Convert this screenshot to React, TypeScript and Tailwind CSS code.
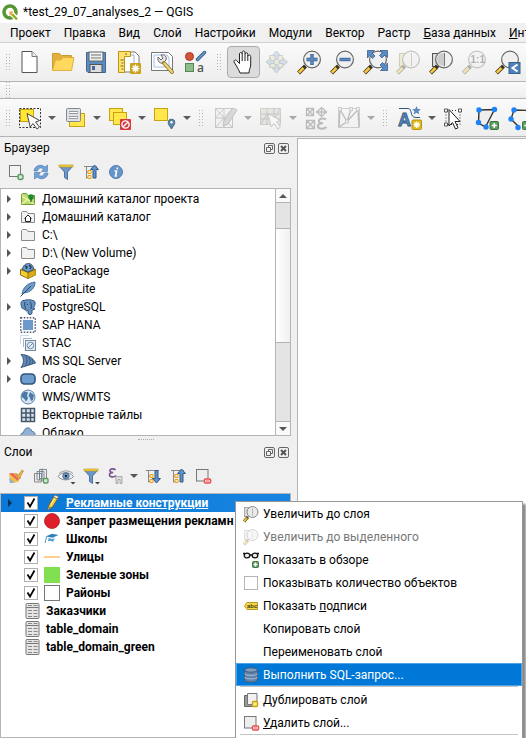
import type { ReactNode } from "react";

type IconProps = { children: ReactNode; size?: number; dim?: boolean };

function Icon({ children, size = 24, dim = false }: IconProps) {
  return (
    <svg
      width={size}
      height={size}
      viewBox={`0 0 ${size} ${size}`}
      fill="none"
      aria-hidden="true"
      className={dim ? "shrink-0 overflow-visible opacity-35" : "shrink-0 overflow-visible"}
    >
      {children}
    </svg>
  );
}

/* ---------- toolbar drawings ---------- */

const NewFile = () => (
  <Icon>
    <path d="M4 1.500h10l5 5v16h-15z" fill="#fff" stroke="#555" />
    <path d="M14 1.500v5h5" fill="#eee" stroke="#777" />
  </Icon>
);

const OpenFolder = () => (
  <Icon>
    <path d="M1.500 20V3.500h7l2 2h10V9" fill="#e3b040" stroke="#c9a030" />
    <path d="M1.500 20.500L4.500 10l5 0 3-2.500h10.500L20.500 20.500z" fill="#ffd95e" stroke="#e0b23c" />
  </Icon>
);

const SaveDisk = () => (
  <Icon>
    <path d="M2.500 2.500h19v20H4l-1.500-1.500z" fill="#5b8bc0" stroke="#3f6797" />
    <rect x="5" y="2" width="14" height="9" fill="#eee" stroke="#666" />
    <path d="M7 5h10M7 8h10" stroke="#777" />
    <rect x="6" y="14.500" width="12" height="8" fill="#ddd" stroke="#555" />
    <rect x="8" y="16" width="3" height="4" fill="#3f6797" />
  </Icon>
);

const NewLayout = () => (
  <Icon>
    <path d="M4 2h14l4 4v16H4z" fill="#fff" stroke="#777" />
    <path d="M7 5h10v10" stroke="#8fb0dd" />
    <path d="M1.500 1.500h12v5h-6v16h-6z" fill="#ffe372" stroke="#b99516" />
    <path d="M3.500 10h3M4.500 13h2M3.500 16h3M4.500 19h2M9 3v2" stroke="#7d6610" />
    <rect x="13" y="13" width="11" height="11" rx="1" fill="#caa21b" />
    <path d="M18.500 14.500v8M14.500 18.500h8M15.800 15.800l5.400 5.400M21.200 15.800l-5.400 5.400" stroke="#fff" strokeWidth="1.400" />
    <circle cx="18.500" cy="18.500" r="2" fill="#fff" />
  </Icon>
);

const LayoutManager = () => (
  <Icon>
    <path d="M1.500 2.500h17l4 4v14h-21z" fill="#fff" stroke="#777" />
    <path d="M4 5h13l2 3v9H4z" stroke="#a8c1e6" />
    <path d="M8 7l3 3 2-2-2-3c4-1 6 2 5 5l-3 3c-3 1-6-2-5-6z" fill="#e6e6e6" stroke="#666" />
    <path d="M14 13l8 9" stroke="#8a7327" strokeWidth="4" strokeLinecap="round" />
    <path d="M14.500 13.500l7.500 8.500" stroke="#eed277" strokeWidth="2.400" strokeLinecap="round" />
  </Icon>
);

const StyleManager = () => (
  <Icon>
    <circle cx="6.500" cy="6.500" r="4" fill="#d4553a" stroke="#a43a24" />
    <path d="M14.500 9.500l7-7" stroke="#3c6191" strokeWidth="3.500" strokeLinecap="round" />
    <path d="M14.500 9.500l7-7" stroke="#6f9bcd" strokeWidth="1.500" strokeLinecap="round" />
    <rect x="2.500" y="13.500" width="8" height="8" fill="#8ebd8b" stroke="#568556" />
    <text x="14" y="22" fontSize="12" fill="#555" className="font-['Open_Sans',sans-serif] font-semibold">a</text>
  </Icon>
);

const PanHand = () => (
  <Icon>
    <path
      d="M8 23c-1-3-2-4-3.500-7L2 12c-.5-2 1.500-2.500 2.500-1.500l3 3V4c0-2 2.500-2 2.700 0V2.500c0-2 2.800-2 2.800 0V4c.3-1.800 2.800-1.600 2.800.3V6c.4-1.600 2.900-1.400 2.900.5V15c0 3-1.700 4-1.700 8z"
      fill="#fff"
      stroke="#222"
    />
    <path d="M10.200 4v7M13 4v7M15.800 6v5" stroke="#222" />
  </Icon>
);

const PanSelection = () => (
  <Icon dim>
    <rect x="4.500" y="5.500" width="13" height="12" fill="#e3dcae" stroke="#a49a5c" />
    <path
      d="M11.500 1l4 4.500h-2.500v4h-3v-4H7.500zM11.500 23l4-4.500h-2.500v-4h-3v4H7.500zM1 12l4.500-4v2.500h4v3h-4V16zM22.500 12L18 8v2.500h-4v3h4V16z"
      fill="#a3b6cb"
      stroke="#6f8296"
    />
  </Icon>
);

const Lens = ({ children, dim = false, behind }: { children?: ReactNode; dim?: boolean; behind?: ReactNode }) => (
  <Icon dim={dim}>
    {behind}
    <path d="M7.500 16L.5 23" stroke="#3b3420" strokeWidth="4" />
    <path d="M5.500 18L.8 22.700" stroke="#fbc93d" strokeWidth="2.600" />
    <circle cx="14" cy="9.500" r="8.400" fill="#efefef" fillOpacity=".9" stroke="#666" strokeWidth="1.200" />
    {children}
  </Icon>
);

const ZoomIn = () => (
  <Lens>
    <path d="M14 4v11M8.500 9.500h11" stroke="#39608d" strokeWidth="3.400" />
    <path d="M14 4.600v9.800M9 9.500h10" stroke="#5b8cc4" strokeWidth="1.800" />
  </Lens>
);
const ZoomOut = () => (
  <Lens>
    <path d="M8.500 9.500h11" stroke="#39608d" strokeWidth="3.400" />
    <path d="M9 9.500h10" stroke="#5b8cc4" strokeWidth="1.800" />
  </Lens>
);
const ZoomFull = () => (
  <Lens>
    <path
      d="M3.500.5h7L8 3l3 3-2.500 2.500-3-3L3.500 8zM23.500.5v7L21 5l-3 3-2.500-2.500 3-3L16 .5zM23.500 20.500h-7L19 18l-3-3 2.500-2.500 3 3 2-2.500z"
      fill="#5b8cc4"
      stroke="#39608d"
      strokeWidth=".8"
    />
  </Lens>
);
const ZoomSelection = () => (
  <Lens dim behind={<rect x="2.500" y="3.500" width="12" height="13" fill="#e0d894" stroke="#8a8350" />}>
    <path d="M14.500 3v13" stroke="#8a8350" />
  </Lens>
);
const ZoomLayer = () => (
  <Lens behind={<rect x="2.500" y="3.500" width="12" height="13" fill="#ddd" stroke="#555" />}>
    <path d="M14 3.500a6 6 0 0 0-7 6 6 6 0 0 0 7 6z" fill="#ccc" />
    <path d="M14.500 3v13" stroke="#777" />
  </Lens>
);
const ZoomNative = () => (
  <Lens dim>
    <text x="7.500" y="13" fontSize="10" fontWeight="700" fill="#333" className="font-['Liberation_Sans',sans-serif]">1:1</text>
  </Lens>
);
const ZoomLast = () => (
  <Lens>
    <rect x="13" y="12.500" width="11" height="11" fill="#4f81bb" stroke="#39608d" />
    <path d="M21.500 14.500l-5 3.500 5 3.500" stroke="#fff" strokeWidth="2" />
  </Lens>
);

const arrowPath = "M9 7.500l3.200 13.500 2.800-3.500 4 5.500 2.500-2-4-5 4-1.500z";

const SelectFeatures = () => (
  <Icon>
    <rect x="1.500" y="2.500" width="21" height="19" stroke="#333" strokeDasharray="2 1.500" />
    <rect x="2.500" y="3.500" width="13" height="12" fill="#ffe733" stroke="#c8a210" />
    <path d={arrowPath} fill="#fff" stroke="#444" />
  </Icon>
);
const SelectByValue = () => (
  <Icon>
    <rect x="6.500" y="7.500" width="15" height="13" fill="#ffe74c" stroke="#c8a210" />
    <rect x="3.500" y="2.500" width="14" height="13" rx="1" fill="#dce3ea" stroke="#888" />
    <path d="M6 6.500h9M6 11.500h9" stroke="#999" strokeWidth="3" />
    <path d="M6.500 6.500h8M6.500 11.500h8" stroke="#fff" />
  </Icon>
);
const Deselect = () => (
  <Icon>
    <rect x="1.500" y="2.500" width="13" height="12" fill="#ffe74c" stroke="#c8a210" />
    <rect x="5.500" y="6.500" width="13" height="12" fill="#ffe74c" stroke="#c8a210" />
    <rect x="12" y="13" width="11" height="11" rx="1" fill="#d8393c" />
    <circle cx="17.500" cy="18.500" r="3.600" stroke="#fff" strokeWidth="1.400" />
    <path d="M15.200 20.800l4.600-4.600" stroke="#fff" strokeWidth="1.400" />
  </Icon>
);
const SelectLocation = () => (
  <Icon>
    <rect x="1.500" y="2.500" width="13" height="12" fill="#ffe74c" stroke="#c8a210" />
    <path d="M18.500 23c-1.500-3-3.300-4-3.300-6.500a3.300 3.300 0 0 1 6.600 0c0 2.500-1.800 3.500-3.300 6.500z" fill="#5c87a8" stroke="#446b8a" />
    <circle cx="18.500" cy="16.300" r="1.200" fill="#fff" />
  </Icon>
);
const CurrentEdits = () => (
  <Icon dim>
    <path d="M1.500 2.500h17v19h-17zM1.500 12h17M10 2.500v19M1.500 2.500l8.500 9.500-8.500 9.500M18.500 2.500L10 12l8.500 9.500M1.500 12L10 2.500" fill="#eee" stroke="#777" />
    <path d="M9 20l1-5L19 2l4 2-9 14z" fill="#b0a5a5" stroke="#666" />
  </Icon>
);
const EditGrid = () => (
  <Icon dim>
    <path d="M1.500 2.500h20v16h-20z" fill="#c7cbb8" stroke="#888" />
    <path d="M1.500 8h20M1.500 13h20M8 2.500v16M15 2.500v16M2 18l6-10 7 5 6-10" stroke="#777" />
    <path d={arrowPath} fill="#fff" stroke="#777" />
  </Icon>
);
const EditEpsilon = () => (
  <Icon dim>
    <path d="M2.500 2.500h7v7h-7zM2.500 2.500l7 7M9.500 2.500l-7 7M2.500 14.500h8v8h-8zM2.500 14.500l8 8M10.500 14.500l-8 8M17.500 1.500l5 4.500-5 4.500-5-4.500zM12.500 6h10M17.500 1.500v9" stroke="#555" strokeWidth="1.300" />
    <path d="M22 13.500c-3-2-8-.5-7 2 .4 1.300 2 1.700 4 1.700-3 0-5 1-5 3 0 3 6 3.300 8.500.8" stroke="#555" strokeWidth="2" />
  </Icon>
);
const EditMesh = () => (
  <Icon dim>
    <path d="M1.500 2.500h21v19h-21z" stroke="#888" />
    <path d="M3 3.500L2 21M3 3.500l7 12L14 3.500M10 15.500l11-12L22 21M10 15.500l-7 5" stroke="#555" strokeWidth="1.300" />
    <path d="M1.500 1.500h3v3h-3zM12.500 1.500h3v3h-3zM19.500 1.500h3v3h-3zM8.500 14h3v3h-3z" fill="#eee" stroke="#777" />
  </Icon>
);
const LabelTool = () => (
  <Icon>
    <text x="0" y="20" fontSize="18" fontWeight="700" fill="#5a89c0" stroke="#325680" strokeWidth=".8" className="font-['Liberation_Sans',sans-serif]">A</text>
    <path d="M1 2.500h9c5 0 1 9 8 9h4" stroke="#325680" />
    <path d="M18.500 0l1.300 3 3.200.2-2.500 2 .8 3.300-2.800-1.800-2.800 1.800.8-3.300-2.500-2 3.200-.2z" fill="#5a89c0" />
    <rect x="14" y="14" width="9.500" height="9.500" rx="1" fill="#e3b91f" stroke="#b8940f" />
    <path d="M18.700 15.500v6.500M15.500 18.700H22M16.500 16.500l4.500 4.500M21 16.500L16.500 21" stroke="#fff" strokeWidth="1.200" />
  </Icon>
);
const MoveVertex = () => (
  <Icon>
    <path d="M3 4.500h14v14H3z" stroke="#333" strokeDasharray="1 2" />
    <path d="M1.500 3h3v3h-3zM15.500 3h3v3h-3zM1.500 17h3v3h-3z" fill="#fff" stroke="#555" />
    <path d="M6 3.500v16.500l3.500-3.500 3 6.500 2.500-1.200-3-6.300h5z" fill="#fff" stroke="#222" />
  </Icon>
);
const AddPolygon = () => (
  <Icon>
    <path d="M3 4L18.500 3.500 9.500 21l-7-4z" fill="#eee" stroke="#333" strokeWidth="1.400" />
    <circle cx="3" cy="4" r="2.700" fill="#1d82f5" />
    <circle cx="18.500" cy="3.500" r="2.700" fill="#1d82f5" />
    <circle cx="2.500" cy="16.500" r="2.700" fill="#1d82f5" />
    <circle cx="10" cy="21" r="2.700" fill="#1d82f5" />
    <rect x="14" y="15.500" width="8.500" height="8" rx="1" fill="#5c9a60" stroke="#3f7545" />
    <path d="M18.300 17v5M15.800 19.500h5" stroke="#fff" strokeWidth="1.600" />
  </Icon>
);
const AddLine = () => (
  <Icon>
    <path d="M22 4.500L5 4 2 13l8 8" stroke="#333" strokeWidth="1.400" />
    <circle cx="5" cy="4" r="2.700" fill="#1d82f5" />
    <circle cx="2" cy="13" r="2.700" fill="#1d82f5" />
    <circle cx="9" cy="21.500" r="2.700" fill="#1d82f5" />
    <rect x="13.500" y="15.500" width="8.500" height="8" rx="1" fill="#5c9a60" stroke="#3f7545" />
    <path d="M17.800 17v5M15.300 19.500h5" stroke="#fff" strokeWidth="1.600" />
  </Icon>
);

/* ---------- dock drawings (16px) ---------- */

const AddSelected = () => (
  <Icon size={16}>
    <rect x="1.500" y="1.500" width="11" height="11" fill="#f3f3f3" stroke="#777" />
    <rect x="10" y="10.500" width="5" height="5" rx="2" fill="#cfe8d0" stroke="#5c9a60" strokeWidth="1.400" />
  </Icon>
);
const Refresh = () => (
  <Icon size={16}>
    <path d="M1 7C1.500 1.500 8-.5 12 3l2.500-2v6.500H8.500L10.500 5C8 3 5 4 4.500 7zM15 9c-.5 5.500-7 7.500-11 4l-2.500 2V8.500h6L5.500 11c2.500 2 5.500 1 6-2z" fill="#6fa0d8" stroke="#4477ad" strokeWidth=".6" />
  </Icon>
);
const Funnel = ({ dropdown = false }: { dropdown?: boolean }) => (
  <Icon size={16}>
    <path d="M1.500 2.500h13L9.500 8v7.500l-3-2V8z" fill="#6c97c6" stroke="#4b74a3" />
    <rect x="1" y="1" width="14" height="2" fill="#f3cf3e" stroke="#b8961c" strokeWidth=".6" />
    {dropdown && <path d="M12 14h5l-2.500 2.500z" fill="#444" />}
  </Icon>
);
const Tree = ({ up = false }: { up?: boolean }) => (
  <Icon size={16}>
    <path d="M1 2.500h13M3.500 2.500v12M3.500 8h3M3.500 13.500h3" stroke="#888" />
    <path d="M5 6.500h3v3H5zM5 11.500h3v3H5z" fill="#fff0b8" stroke="#eda01c" />
    {up ? (
      <path d="M11.500 1l4 4.500h-2.500v8.500h-3V5.500H7.500z" fill="#5f91ca" stroke="#345b89" />
    ) : (
      <path d="M11.500 15l4-4.500h-2.500V2.500h-3v8H7.500z" fill="#5f91ca" stroke="#345b89" />
    )}
  </Icon>
);
const Info = () => (
  <Icon size={16}>
    <circle cx="8" cy="8" r="6.500" fill="#6494cb" stroke="#547fae" />
    <path d="M9.500 3.500l-.3 1.800M8.800 6.500L7.500 12M6.500 7h2.300M6.500 12h2.500" stroke="#fff" strokeWidth="1.600" />
  </Icon>
);
const Brush = () => (
  <Icon size={16}>
    <path d="M1 6l7-1 4 4-2 5-7 1z" fill="#f4bf45" />
    <path d="M1 5.500l4-.5 6 6-1 2z" fill="#e8665c" />
    <path d="M1 10l6 4.500-5 .5z" fill="#8fabd3" />
    <path d="M7.500 5.500l3 1.500 3.500-5 1.500 1-3 5L12 11z" fill="#edb64d" stroke="#b9822a" strokeWidth=".7" />
  </Icon>
);
const AddGroup = () => (
  <Icon size={16}>
    <path d="M1.500 5.500h7v8.500h-7zM4 3.500h7v8.500H4zM6.500 1.500h7v9h-7z" fill="#eee" stroke="#888" />
    <path d="M9 .500v9M6.500 5v7" stroke="#5681a8" />
    <rect x="10.500" y="10.500" width="4.500" height="4.500" rx="1" fill="#d7ecd8" stroke="#5c9a60" strokeWidth="1.400" />
  </Icon>
);
const Eye = () => (
  <Icon size={16}>
    <path d="M0 8.500C3 4 11 3 15.500 8.500 11 13 4 13 0 8.500z" fill="#f5f5f5" stroke="#888" />
    <path d="M1 5.500C5 2 11 2 15 5.500" stroke="#999" />
    <circle cx="8" cy="8" r="3.200" fill="#6f9ac8" stroke="#446d99" />
    <circle cx="8" cy="8" r="1.200" fill="#222" />
    <path d="M12.500 14h5L15 16.500z" fill="#444" />
  </Icon>
);
const Epsilon = () => (
  <Icon size={16}>
    <path d="M7.500 2C5.500-.2 1.500 1 2 3c.3 1 1.500 1.500 3.200 1.500C3 4.500 1.300 5.200 1.500 7c.3 2.500 4.500 2.500 6.500.5" stroke="#7b5590" strokeWidth="1.700" />
    <path d="M7.500 8.500h6.500v7h-2v-4h-2v4H8v-3.500z" fill="#ddd" stroke="#999" strokeWidth=".8" />
  </Icon>
);
const RemoveLayer = () => (
  <Icon size={16}>
    <rect x="1.500" y="1.500" width="11.500" height="11.500" fill="#eee" stroke="#777" />
    <rect x="9.500" y="11" width="6" height="4" rx="1" fill="#fff" stroke="#ec4b50" strokeWidth="1.600" />
    <path d="M11 13h3" stroke="#ec4b50" />
  </Icon>
);

const folderPath = "M1.500 3.500l1-1h4l1.500 2h6.500v9h-13z";
const FolderIcon = () => (
  <Icon size={16}>
    <path d={folderPath} fill="#f1f1f1" stroke="#8b8b8b" />
  </Icon>
);
const ProjectHome = () => (
  <Icon size={16}>
    <path d={folderPath} fill="#b9dc70" stroke="#6f9b35" />
    <path d="M2 5l12 8M2 13l7-6" stroke="#f6f1a5" strokeWidth="1.400" />
    <circle cx="11" cy="6" r="2.800" fill="#1f8e2a" />
    <path d="M11 7v4" stroke="#1f6e2a" strokeWidth="1.400" />
  </Icon>
);
const HomeFolder = () => (
  <Icon size={16}>
    <path d={folderPath} fill="#f1f1f1" stroke="#8b8b8b" />
    <path d="M4.500 9.500L8 6l3.500 3.500M5.500 9v3.500h5V9" fill="#fff" stroke="#222" />
  </Icon>
);
const GeoPackage = () => (
  <Icon size={16}>
    <path d="M.5 6.500L8 4l7.500 2.500v5.500L8 15.500.5 12z" fill="#f3cf2f" stroke="#8b7413" />
    <path d="M8 9.500l7.500-3v5.500L8 15.500z" fill="#d8aa17" />
    <path d="M.5 6.500L8 9.500l7.500-3M8 9.500v6" stroke="#8b7413" />
    <path d="M2.500 6.500C3 2 6 .5 8.500.5S13.500 2.500 13.500 6.500L8 9z" fill="#6f9bc8" stroke="#39536e" />
    <path d="M5 3l2 1-1 2M9 2l2 2-1 2" stroke="#223c58" strokeWidth="1.400" />
  </Icon>
);
const Feather = () => (
  <Icon size={16}>
    <path d="M2 13C3 6 8 2 15 1c0 6-4 10-11 11z" fill="#6f9bc8" stroke="#486f99" />
    <path d="M.5 15.500L11 5" stroke="#304e6e" />
  </Icon>
);
const Elephant = () => (
  <Icon size={16}>
    <path d="M2 9C0 4 1 1.500 4 1.500c2-1 7-1 9 0 3 .5 2.500 4 .5 7.500l1.500 1-3 1v3c0 2-4 2-4 0v-3L6.500 12 4 10z" fill="#6792c2" stroke="#36587e" />
    <path d="M5 3c-1 3 0 5 1 7M10 3c2 2 1 4 1 7M7.500 5v1" stroke="#26476c" />
  </Icon>
);
const SapHana = () => (
  <Icon size={16}>
    <rect x=".75" y=".75" width="14.500" height="14.500" stroke="#557" strokeWidth="1.500" strokeDasharray="1.500 1.500" />
    <rect x="2.500" y="2.500" width="11" height="11" fill="#6c9bcb" stroke="#f4f7fa" />
  </Icon>
);
const Stac = () => (
  <Icon size={16}>
    <path d="M.5 9V.5H9" stroke="#cdd9e6" />
    <path d="M3.500 12V3.500H12" stroke="#9fb6cd" />
    <rect x="5.500" y="5.500" width="10" height="10" fill="#e4ebf2" stroke="#778797" />
    <circle cx="10.500" cy="10.500" r="3.300" stroke="#6c90b4" />
    <path d="M8 13l5-5" stroke="#6c90b4" />
  </Icon>
);
const SqlServer = () => (
  <Icon size={16}>
    <path d="M1 1.500c6 0 12 3 14.500 8.500L1 14.500C4.500 10 4 5 1 1.500z" fill="#5f89b8" stroke="#38587c" />
    <path d="M5.500 2.500c2 3 2 7 0 10M9 4c1.500 2.500 1.500 5 0 8M12 6c1 2 1 3 0 5" stroke="#38587c" />
  </Icon>
);
const OracleIcon = () => (
  <Icon size={16}>
    <rect x="1" y="3" width="14" height="10" rx="3.500" fill="#6d9ccd" stroke="#33557d" strokeWidth="1.600" />
  </Icon>
);
const Globe = () => (
  <Icon size={16}>
    <circle cx="8" cy="8" r="7" fill="#d8e4f0" stroke="#5d83a9" />
    <path d="M2 4.500l3-2 3 1-1 3 1 3-2 3-2-3-2.500-1.500zM10 3l4 3-1 5-2 1-1-3-1.500-2z" fill="#4b7aa9" />
  </Icon>
);
const VectorTiles = () => (
  <Icon size={16}>
    <path d="M1.500 1.500h13v13h-13zM6 1.500v13M10.500 1.500v13M1.500 6h13M1.500 10.500h13" fill="#d9e3ee" stroke="#46586c" strokeWidth="1.500" />
  </Icon>
);
const Cloud = () => (
  <Icon size={16}>
    <path d="M1 12c-1-3 1-4.500 2.500-4.500C4.500 2 10 1 12 6.500c3 0 4 3.500 2.500 5.500z" fill="#8fb1d6" stroke="#52789f" />
  </Icon>
);
const Pencil = () => (
  <Icon size={16}>
    <path d="M3.500 15l1.500-5L9.500 2l4 2L8.500 12z" fill="#f5cf43" stroke="#6f6434" />
    <path d="M9.500 2L11 0l3.500 1.500-1 2.500zM3.500 15l1-3 2 1z" fill="#eee" stroke="#6f6434" strokeWidth=".7" />
    <path d="M6.500 10l4.500-7" stroke="#fff2a0" />
  </Icon>
);
const RedCircle = () => (
  <Icon size={16}>
    <circle cx="8" cy="8" r="7.500" fill="#de1f2c" stroke="#b51c27" strokeWidth=".8" />
  </Icon>
);
const School = () => (
  <Icon size={16}>
    <path d="M1.500 5.500L8 2.800l6.500 1.200-6 2.800z" fill="#2e83b8" />
    <path d="M4.500 7L4 10.500c2-.8 4-.3 5 .5l2-4-2.500 1z" fill="#5ba2cd" />
    <path d="M2.500 6L1 12" stroke="#4b9ac8" />
  </Icon>
);
const StreetLine = () => (
  <Icon size={16}>
    <path d="M0 8h16" stroke="#ffcd8f" strokeWidth="2" />
  </Icon>
);
const GreenBox = () => (
  <Icon size={16}>
    <rect width="16" height="16" fill="#80e052" />
  </Icon>
);
const WhiteBox = () => (
  <Icon size={16}>
    <rect x=".5" y=".5" width="15" height="15" fill="#fff" stroke="#777" />
  </Icon>
);
const TableIcon = () => (
  <Icon size={16}>
    <rect x="2" y=".5" width="13" height="15" rx="1" fill="#e6e6e6" stroke="#777" />
    <path d="M2.500 4.500h12" stroke="#777" />
    <path d="M4 2.500h4M9.500 2.500h4M4 7.500h4M9.500 7.500h4M4 10.500h4M9.500 10.500h4M4 13.500h4M9.500 13.500h4" stroke="#888" />
  </Icon>
);

/* ---------- context menu drawings ---------- */

const MenuLens = ({ dim = false }: { dim?: boolean }) => (
  <Icon size={16} dim={dim}>
    <rect x="1.500" y="1.500" width="9" height="9" fill="#ddd" stroke="#aaa" />
    <path d="M5 11L1 15.500" stroke="#5d4d16" strokeWidth="3" />
    <path d="M4 12L1 15.300" stroke="#f6c437" strokeWidth="1.800" />
    <circle cx="9.500" cy="6" r="5.500" fill="#e9e9e9" stroke="#888" />
    <path d="M9.500 2v8" stroke="#bbb" />
  </Icon>
);
const Glasses = () => (
  <Icon size={16}>
    <path d="M0 1.500h2M14 1.500h2M7 3h2" stroke="#111" strokeWidth="1.400" />
    <ellipse cx="4" cy="3.500" rx="2.800" ry="2.400" fill="#eee" stroke="#111" strokeWidth="1.300" />
    <ellipse cx="12" cy="3.500" rx="2.800" ry="2.400" fill="#eee" stroke="#111" strokeWidth="1.300" />
    <rect x="9.500" y="9.500" width="6" height="6" rx="1" fill="#5c9a60" stroke="#3f7545" />
    <path d="M12.500 10.500v4M10.500 12.500h4" stroke="#fff" strokeWidth="1.400" />
  </Icon>
);
const AbcTag = () => (
  <Icon size={16}>
    <path d="M1.500 8l2.500-3.500h10.500v7H4z" fill="#f4d94f" stroke="#b79a22" />
    <text x="4" y="10" fontSize="6" fontWeight="700" fill="#4a3d07" className="font-['Liberation_Sans',sans-serif]">abc</text>
  </Icon>
);
const Database = () => (
  <Icon size={16}>
    <path d="M1.500 3v10c0 3 13 3 13 0V3" fill="#5f83ab" stroke="#3e5d7e" />
    <path d="M1.500 6.500c0 2.500 13 2.500 13 0M1.500 10c0 2.500 13 2.500 13 0" stroke="#a9bdd2" />
    <ellipse cx="8" cy="3" rx="6.500" ry="2.200" fill="#7d9cbe" stroke="#3e5d7e" />
  </Icon>
);
const Duplicate = () => (
  <Icon size={16}>
    <path d="M1.500 3.500h9v11h-9z" fill="#999" stroke="#666" />
    <path d="M4.500 1.500h9.500v11H4.500z" fill="#f1f1f1" stroke="#777" />
    <rect x="9.500" y="9.500" width="5" height="5" rx="1" fill="#fbe88a" stroke="#c8a210" strokeWidth="1.400" />
  </Icon>
);

/* ---------- building blocks ---------- */

function Grip({ rows = 6 }: { rows?: number }) {
  return (
    <div className="flex w-4 shrink-0 items-center justify-center">
      <svg width="4" height={rows * 3 - 2} fill="#b4b4b4" aria-hidden="true">
        {Array.from({ length: rows }, (_, i) => (
          <g key={i}>
            <rect x="0" y={i * 3} width="1" height="1" />
            <rect x="3" y={i * 3} width="1" height="1" />
          </g>
        ))}
      </svg>
    </div>
  );
}

type Tool = { label: string; icon: ReactNode; menu?: boolean; dim?: boolean; active?: boolean };

function ToolButton({ label, icon, menu, dim, active }: Tool) {
  return (
    <div className="flex shrink-0 items-center">
      <button
        type="button"
        aria-label={label}
        disabled={dim}
        aria-pressed={active}
        className={
          active
            ? "flex h-8 w-[33px] items-center justify-center rounded-sm border border-[#ababab] bg-[#dcdcdc]"
            : "flex h-8 w-[33px] items-center justify-center"
        }
      >
        {icon}
      </button>
      {menu && (
        <button type="button" aria-label={`${label}: меню`} disabled={dim} className="flex h-8 w-3 items-center justify-center">
          <svg width="8" height="4" viewBox="0 0 8 4" aria-hidden="true">
            <path d="M0 0h8L4 4z" fill={dim ? "#a9a9a9" : "#5c5c5c"} />
          </svg>
        </button>
      )}
    </div>
  );
}

const menus = ["Проект", "Правка", "Вид", "Слой", "Настройки", "Модули", "Вектор", "Растр"];

const fileTools: Tool[] = [
  { label: "Создать", icon: <NewFile /> },
  { label: "Открыть", icon: <OpenFolder /> },
  { label: "Сохранить", icon: <SaveDisk /> },
  { label: "Новый макет", icon: <NewLayout /> },
  { label: "Менеджер макетов", icon: <LayoutManager /> },
  { label: "Менеджер стилей", icon: <StyleManager /> },
];

const navTools: Tool[] = [
  { label: "Прокрутка карты", icon: <PanHand />, active: true },
  { label: "Центрировать выделение", icon: <PanSelection />, dim: true },
  { label: "Увеличить", icon: <ZoomIn /> },
  { label: "Уменьшить", icon: <ZoomOut /> },
  { label: "Полный охват", icon: <ZoomFull /> },
  { label: "Увеличить до выделенного", icon: <ZoomSelection />, dim: true },
  { label: "Увеличить до слоя", icon: <ZoomLayer /> },
  { label: "Исходный масштаб", icon: <ZoomNative />, dim: true },
  { label: "Предыдущий охват", icon: <ZoomLast /> },
];

const selectTools: Tool[] = [
  { label: "Выбрать объекты", icon: <SelectFeatures />, menu: true },
  { label: "Выбрать по значению", icon: <SelectByValue />, menu: true },
  { label: "Снять выделение", icon: <Deselect />, menu: true },
  { label: "Выбрать по району", icon: <SelectLocation />, menu: true },
];

const meshTools: Tool[] = [
  { label: "Текущие правки", icon: <CurrentEdits />, menu: true, dim: true },
  { label: "Править сетку", icon: <EditGrid />, menu: true, dim: true },
  { label: "Выражение", icon: <EditEpsilon />, dim: true },
  { label: "Преобразовать сетку", icon: <EditMesh />, menu: true, dim: true },
];

const noteTools: Tool[] = [
  { label: "Аннотация", icon: <LabelTool />, menu: true },
  { label: "Изменить аннотацию", icon: <MoveVertex /> },
  { label: "Добавить полигон", icon: <AddPolygon /> },
  { label: "Добавить линию", icon: <AddLine /> },
];

function DockTitle({ title }: { title: string }) {
  return (
    <div className="flex h-5 shrink-0 items-center justify-between pr-[2px] pl-1">
      <h2>{title}</h2>
      <div className="flex gap-[3px]">
        <button type="button" aria-label={`Открепить: ${title}`}>
          <svg width="11" height="11" viewBox="0 0 11 11" fill="none" stroke="#666" aria-hidden="true">
            <rect x=".5" y=".5" width="10" height="10" rx="1.500" />
            <path d="M4.500 5V2.500h4v4H6.500M2.500 4.500h4v4h-4z" />
          </svg>
        </button>
        <button type="button" aria-label={`Закрыть: ${title}`}>
          <svg width="11" height="11" viewBox="0 0 11 11" fill="none" stroke="#666" aria-hidden="true">
            <rect x=".5" y=".5" width="10" height="10" rx="1.500" />
            <path d="M3 3l5 5M8 3L3 8" stroke="#555" strokeWidth="2" />
          </svg>
        </button>
      </div>
    </div>
  );
}

function DockTool({ label, children }: { label: string; children: ReactNode }) {
  return (
    <button type="button" aria-label={label} className="flex h-6 w-[25px] items-center justify-center">
      {children}
    </button>
  );
}

function Expander({ label, dark = false }: { label: string; dark?: boolean }) {
  return (
    <button type="button" aria-label={`Развернуть ${label}`} className="flex h-full w-4 items-center justify-center">
      <svg width="4" height="8" viewBox="0 0 4 8" aria-hidden="true">
        <path d="M0 0l4 4-4 4z" fill={dark ? "#06305c" : "#555"} />
      </svg>
    </button>
  );
}

const places: { name: string; icon: ReactNode; open?: boolean }[] = [
  { name: "Домашний каталог проекта", icon: <ProjectHome />, open: true },
  { name: "Домашний каталог", icon: <HomeFolder />, open: true },
  { name: "C:\\", icon: <FolderIcon />, open: true },
  { name: "D:\\ (New Volume)", icon: <FolderIcon />, open: true },
  { name: "GeoPackage", icon: <GeoPackage />, open: true },
  { name: "SpatiaLite", icon: <Feather /> },
  { name: "PostgreSQL", icon: <Elephant />, open: true },
  { name: "SAP HANA", icon: <SapHana /> },
  { name: "STAC", icon: <Stac /> },
  { name: "MS SQL Server", icon: <SqlServer />, open: true },
  { name: "Oracle", icon: <OracleIcon />, open: true },
  { name: "WMS/WMTS", icon: <Globe /> },
  { name: "Векторные тайлы", icon: <VectorTiles /> },
  { name: "Облако", icon: <Cloud /> },
];

function BrowserDock() {
  return (
    <section>
      <DockTitle title="Браузер" />
      <div className="mb-0.5 flex h-7 items-center pl-[3px]">
        <DockTool label="Добавить выбранные слои"><AddSelected /></DockTool>
        <DockTool label="Обновить"><Refresh /></DockTool>
        <DockTool label="Фильтр"><Funnel /></DockTool>
        <DockTool label="Свернуть всё"><Tree up /></DockTool>
        <DockTool label="Свойства"><Info /></DockTool>
      </div>
      <div className="flex h-[248px] overflow-hidden border border-[#b4b4b4] bg-white">
        <ul className="min-w-0 flex-1 overflow-hidden pt-px">
          {places.map((p) => (
            <li key={p.name} className="flex h-[18px] items-center">
              <div className="h-full w-[19px]">{p.open && <Expander label={p.name} />}</div>
              {p.icon}
              <span className="ml-1.5 whitespace-nowrap">{p.name}</span>
            </li>
          ))}
        </ul>
        <div className="flex w-[15px] shrink-0 flex-col border-l border-[#b4b4b4] bg-linear-to-r from-white to-[#f0f0f0]">
          <button type="button" aria-label="Вверх" className="flex h-[14px] shrink-0 items-center justify-center border-b border-[#b4b4b4] bg-[#fafafa]">
            <svg width="8" height="4" viewBox="0 0 8 4" aria-hidden="true"><path d="M0 4h8L4 0z" fill="#555" /></svg>
          </button>
          <div className="h-[25px] bg-[#e4e4e4]" />
          <div className="h-[115px] border-y border-[#b4b4b4]" />
          <div className="flex-1 bg-[#e4e4e4]" />
          <button type="button" aria-label="Вниз" className="flex h-[14px] shrink-0 items-center justify-center border-t border-[#b4b4b4] bg-[#fafafa]">
            <svg width="8" height="4" viewBox="0 0 8 4" aria-hidden="true"><path d="M0 0h8L4 4z" fill="#555" /></svg>
          </button>
        </div>
      </div>
    </section>
  );
}

const layers: { name: string; icon: ReactNode; selected?: boolean }[] = [
  { name: "Рекламные конструкции", icon: <Pencil />, selected: true },
  { name: "Запрет размещения рекламн", icon: <RedCircle /> },
  { name: "Школы", icon: <School /> },
  { name: "Улицы", icon: <StreetLine /> },
  { name: "Зеленые зоны", icon: <GreenBox /> },
  { name: "Районы", icon: <WhiteBox /> },
];

const tables = ["Заказчики", "table_domain", "table_domain_green"];

function LayersDock() {
  return (
    <section className="flex min-h-0 flex-1 flex-col pt-0.5">
      <DockTitle title="Слои" />
      <div className="flex h-[31px] shrink-0 items-start pt-0.5 pl-[3px]">
        <DockTool label="Стили"><Brush /></DockTool>
        <DockTool label="Добавить группу"><AddGroup /></DockTool>
        <DockTool label="Видимость"><Eye /></DockTool>
        <DockTool label="Фильтр легенды"><Funnel dropdown /></DockTool>
        <DockTool label="Фильтр по выражению"><Epsilon /></DockTool>
        <button type="button" aria-label="Параметры фильтра" className="flex h-6 w-3 items-center justify-center">
          <svg width="8" height="4" viewBox="0 0 8 4" aria-hidden="true"><path d="M0 0h8L4 4z" fill="#555" /></svg>
        </button>
        <DockTool label="Развернуть всё"><Tree /></DockTool>
        <DockTool label="Свернуть всё"><Tree up /></DockTool>
        <DockTool label="Удалить слой"><RemoveLayer /></DockTool>
      </div>
      <ul className="min-h-0 flex-1 overflow-hidden border border-[#b4b4b4] bg-white font-bold">
        {layers.map((l) => (
          <li
            key={l.name}
            className={l.selected ? "flex h-[18px] items-center bg-linear-to-r from-[#0a78d8] to-[#1684e0] text-white" : "flex h-[18px] items-center"}
          >
            <div className="h-full w-[23px] shrink-0 pl-px">{l.selected && <Expander label={l.name} dark />}</div>
            <label className="flex items-center">
              <span className="grid shrink-0">
                <input
                  type="checkbox"
                  defaultChecked
                  className="peer size-[14px] appearance-none border border-[#b0b0b0] bg-white [grid-area:1/1]"
                />
                <svg
                  width="14"
                  height="14"
                  viewBox="0 0 14 14"
                  fill="none"
                  aria-hidden="true"
                  className="pointer-events-none invisible [grid-area:1/1] peer-checked:visible"
                >
                  <path d="M3.500 6.500L6 10.500l4.500-8" stroke="#000" strokeWidth="1.700" />
                </svg>
              </span>
              <span className="mr-1.5 ml-1.5 flex">{l.icon}</span>
              <span className={l.selected ? "whitespace-nowrap underline" : "whitespace-nowrap"}>{l.name}</span>
            </label>
          </li>
        ))}
        {tables.map((t) => (
          <li key={t} className="flex h-[18px] items-center gap-1.5 pl-[23px]">
            <TableIcon />
            <span>{t}</span>
          </li>
        ))}
      </ul>
    </section>
  );
}

function MenuItem({ icon, children, selected, dim }: { icon?: ReactNode; children: ReactNode; selected?: boolean; dim?: boolean }) {
  return (
    <li>
      <button
        type="button"
        disabled={dim}
        className={
          selected
            ? "flex h-[23px] w-full items-center border border-[#4aa5ec] bg-[#0078d7] pl-1.5 text-left text-white"
            : dim
              ? "flex h-[23px] w-full items-center pl-[7px] text-left text-[#777]"
              : "flex h-[23px] w-full items-center pl-[7px] text-left"
        }
      >
        <span className="mr-1 flex size-4 shrink-0">{icon}</span>
        <span>{children}</span>
      </button>
    </li>
  );
}

function ContextMenu() {
  return (
    <ul className="absolute top-[501px] left-[235px] w-[288px] border border-[#979797] bg-white shadow-[3px_3px_2px_rgba(0,0,0,0.45)]">
      <MenuItem icon={<MenuLens />}>Увеличить до слоя</MenuItem>
      <MenuItem icon={<MenuLens dim />} dim>Увеличить до выделенного</MenuItem>
      <MenuItem icon={<Glasses />}>Показать в обзоре</MenuItem>
      <li>
        <label className="flex h-[23px] items-center pl-2">
          <input type="checkbox" className="mr-[5px] size-[14px] appearance-none border border-[#b5b5b5] bg-white" />
          Показывать количество объектов
        </label>
      </li>
      <MenuItem icon={<AbcTag />}>Показать <u>п</u>одписи</MenuItem>
      <MenuItem>Копировать слой</MenuItem>
      <MenuItem>Переименовать слой</MenuItem>
      <MenuItem icon={<Database />} selected>Выполнить SQL-запрос...</MenuItem>
      <li role="separator" className="mx-1 mb-px h-px bg-[#c4c4c4]" />
      <MenuItem icon={<Duplicate />}><u>Д</u>ублировать слой</MenuItem>
      <MenuItem icon={<RemoveLayer />}><u>У</u>далить слой...</MenuItem>
      <li role="separator" className="mx-1 mb-8 h-px bg-[#c4c4c4]" />
    </ul>
  );
}

export default function App() {
  return (
    <div className="relative flex h-screen w-full flex-col overflow-hidden bg-[#f0f0f0] font-['Roboto','Open_Sans',sans-serif] text-[12px] leading-[18px] text-black">
      <header className="flex h-[23px] shrink-0 items-center gap-[5px] bg-white pl-[2px]">
        <Icon size={16}>
          <circle cx="8" cy="8" r="6" stroke="#589632" strokeWidth="3.500" />
          <path d="M9.500 9.500l7 7" stroke="#fff" strokeWidth="5" />
          <path d="M7.500 7.500h4l-1.500 1.500 2 2-1.500 1.500-2-2-1 1.500z" fill="#f0a13a" />
          <path d="M10.500 10.500l4.500 5" stroke="#93b023" strokeWidth="2.500" />
        </Icon>
        <h1>*test_29_07_analyses_2 — QGIS</h1>
      </header>

      <nav className="flex h-5 shrink-0 items-center gap-[13px] overflow-hidden border-b border-[#d0d0d0] pl-[10px] whitespace-nowrap">
        {menus.map((m) => (
          <button key={m} type="button" className="shrink-0">{m}</button>
        ))}
        <button type="button" className="shrink-0"><u>Б</u>аза данных</button>
        <button type="button" className="shrink-0"><u>И</u>нтернет</button>
      </nav>

      <div className="flex h-[39px] shrink-0 items-center overflow-hidden border-b border-[#b4b4b4] bg-linear-to-b from-[#fafafa] to-[#eeeeee]">
        <div className="-mr-[3px] flex"><Grip /></div>
        {fileTools.map((t) => <ToolButton key={t.label} {...t} />)}
        <Grip />
        {navTools.map((t) => <ToolButton key={t.label} {...t} />)}
      </div>

      <div className="flex h-[17px] shrink-0 border-b border-[#b4b4b4] bg-linear-to-b from-[#fafafa] to-[#eeeeee]">
        <Grip />
      </div>

      <div className="flex h-[38px] shrink-0 items-center overflow-hidden border-b border-[#b4b4b4] bg-linear-to-b from-[#fafafa] to-[#eeeeee]">
        <div className="-mr-[3px] flex"><Grip /></div>
        {selectTools.map((t) => <ToolButton key={t.label} {...t} />)}
        <Grip />
        {meshTools.map((t) => <ToolButton key={t.label} {...t} />)}
        <Grip />
        {noteTools.map((t) => <ToolButton key={t.label} {...t} />)}
      </div>

      <main className="flex min-h-0 flex-1 pt-px">
        <div className="flex w-[291px] shrink-0 flex-col">
          <BrowserDock />
          <div className="flex h-1 items-end justify-center">
            <div className="w-4 border-b border-dotted border-[#aaa]" />
          </div>
          <LayersDock />
        </div>
        <div className="ml-[6px] flex-1 border-t border-l border-[#b4b4b4] bg-white" />
      </main>

      <ContextMenu />
    </div>
  );
}
